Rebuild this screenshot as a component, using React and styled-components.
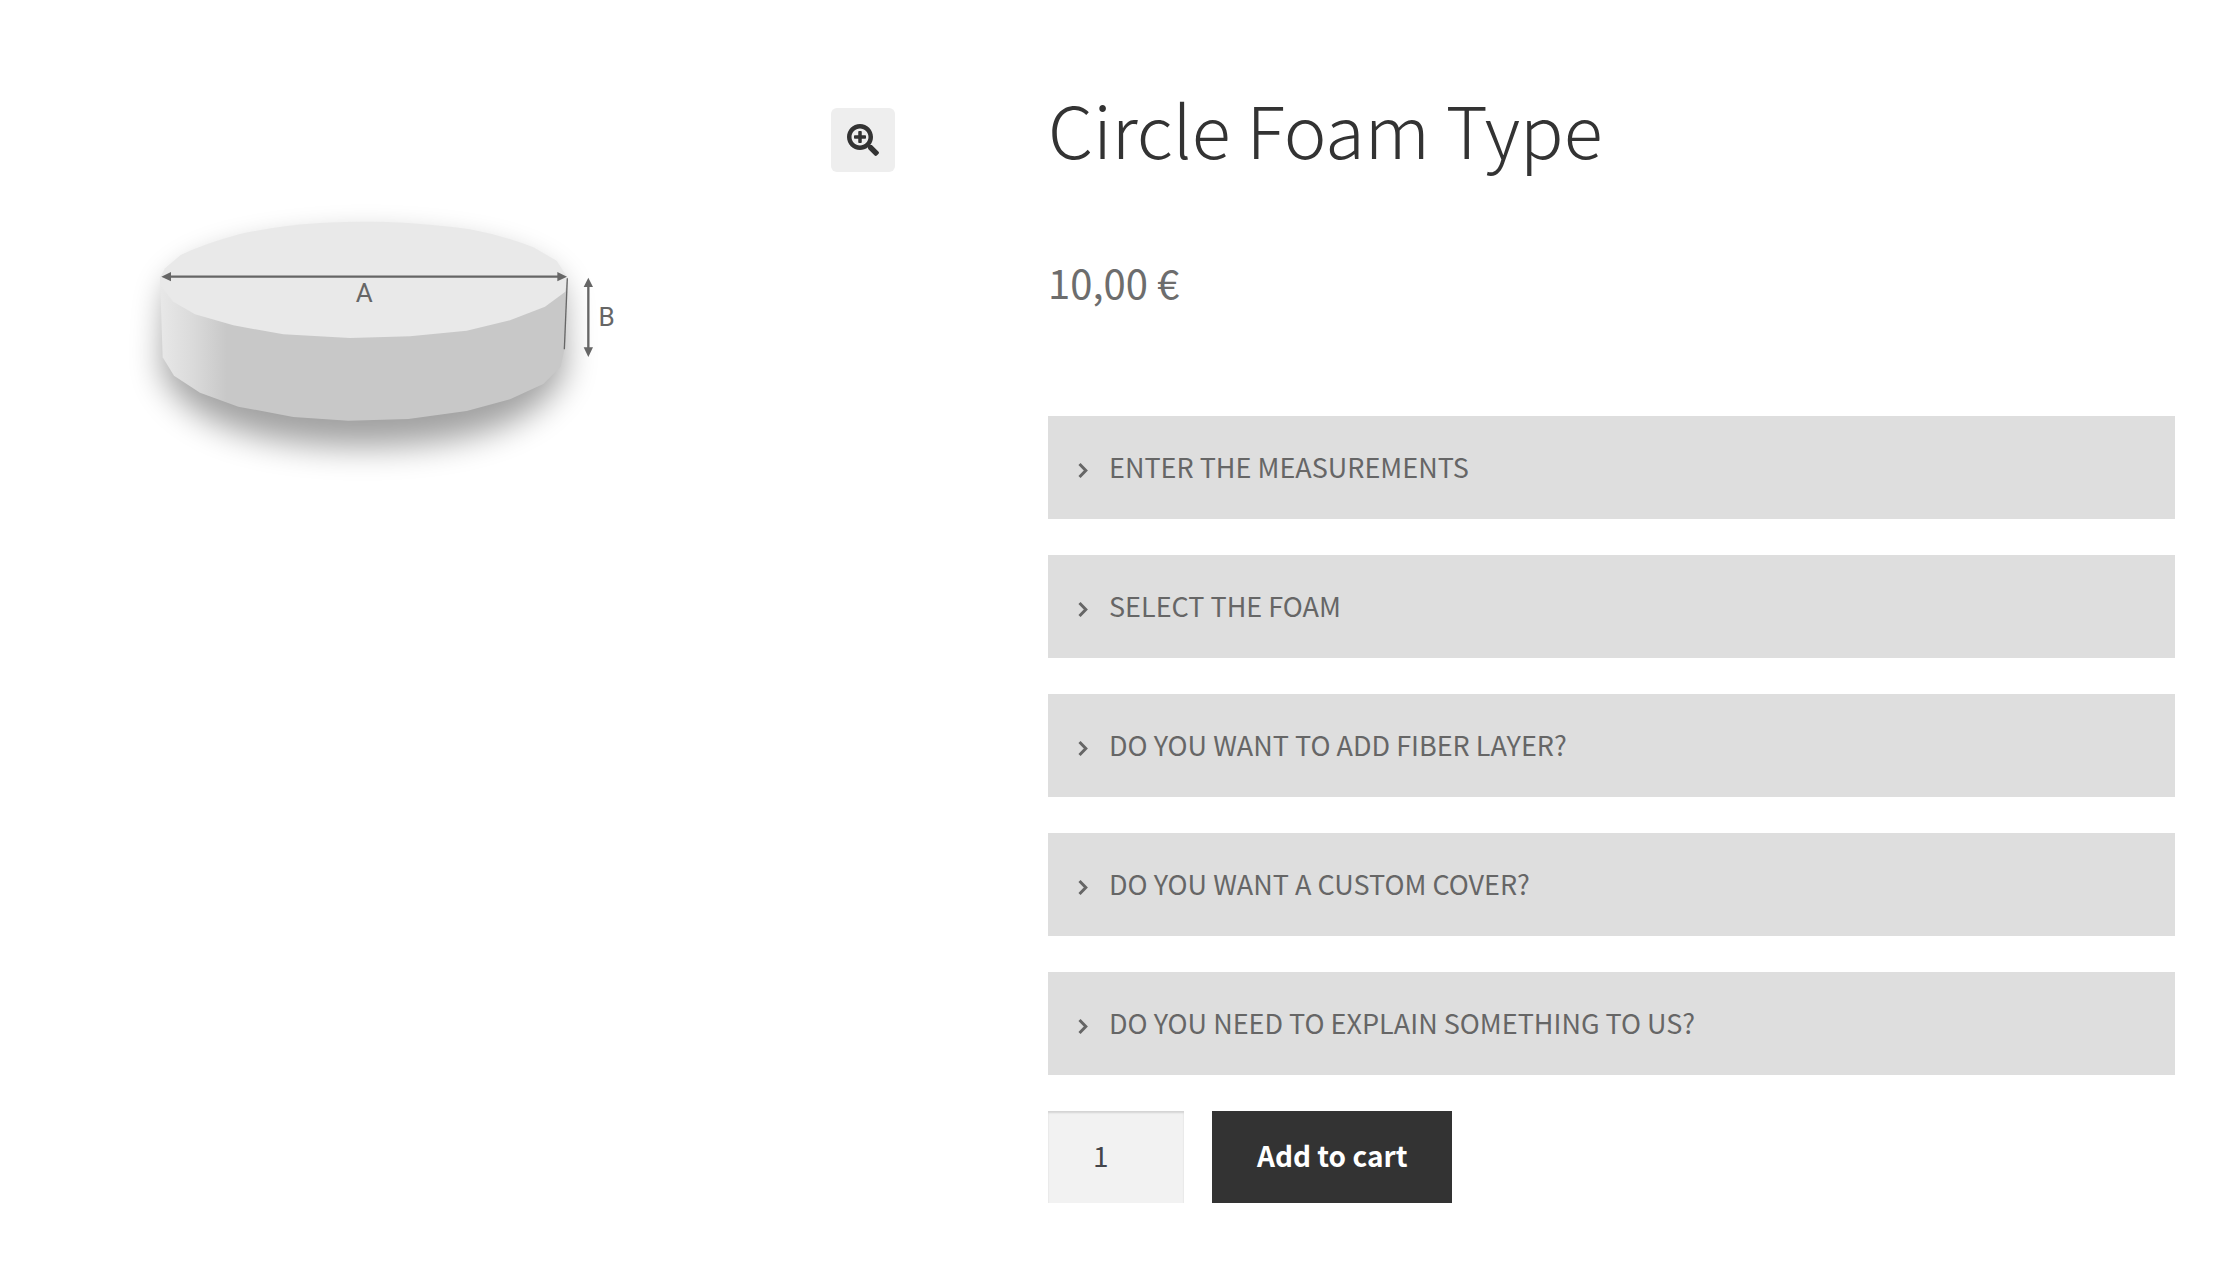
import React, { useState } from 'react';
import styled, { createGlobalStyle } from 'styled-components';
import { FaSearchPlus } from 'react-icons/fa';

const GlobalStyle = createGlobalStyle`
  *, *::before, *::after {
    box-sizing: border-box;
  }

  body {
    margin: 0;
    background-color: #ffffff;
    color: #6d6d6d;
    font-family: 'Source Sans Pro', 'Noto Sans CJK SC', sans-serif;
    font-size: 28px;
  }
`;

const ProductSection = styled.main`
  display: grid;
  grid-template-columns: 874fr 1127fr;
  gap: 123px;
  align-items: start;
  padding: 80px 51px 0;
`;

const Gallery = styled.div`
  position: relative;
`;

const ProductDrawing = styled.svg`
  display: block;
  width: 100%;
  height: auto;
`;

/* Sits over the top right corner of the product picture */
const ZoomButton = styled.button`
  position: absolute;
  top: 28px;
  right: 30px;
  display: flex;
  align-items: center;
  justify-content: center;
  width: 64px;
  height: 64px;
  padding: 0;
  border: 0;
  border-radius: 6px;
  background-color: #eeeeee;
  color: #333333;
  font-size: 32px;
  cursor: pointer;
`;

const Summary = styled.div`
  min-width: 0;
`;

const ProductName = styled.h1`
  margin: 0;
  color: #333333;
  font-size: 72px;
  font-weight: 300;
  line-height: 96px;
`;

const ProductPrice = styled.p`
  margin: 78px 0 106px;
  font-size: 40px;
  line-height: 56px;
`;

const OptionList = styled.div`
  display: flex;
  flex-direction: column;
  gap: 36px;
`;

const OptionButton = styled.button`
  display: flex;
  align-items: center;
  gap: 19px;
  width: 100%;
  padding: 30px 28px 32px;
  border: 0;
  background-color: #dedede;
  color: #666666;
  font-family: inherit;
  font-size: 27px;
  line-height: 41px;
  text-align: left;
  text-transform: uppercase;
  cursor: pointer;
`;

const Chevron = styled.svg`
  flex: none;
  width: 14px;
  height: 24px;
  fill: none;
  stroke: currentColor;
  stroke-width: 3;
`;

const CartForm = styled.form`
  display: flex;
  gap: 28px;
  margin-top: 36px;
`;

const QuantityInput = styled.input`
  width: 136px;
  height: 92px;
  padding: 0 0 4px 45px;
  border: 0;
  border-radius: 0;
  background-color: #f2f2f2;
  box-shadow: inset 0 2px 2px rgba(0, 0, 0, 0.125);
  color: #43454b;
  font-family: inherit;
  font-size: 28px;
  appearance: textfield;
`;

const CartButton = styled.button`
  height: 92px;
  padding: 0 45px 4px;
  border: 0;
  background-color: #333333;
  color: #ffffff;
  font-family: inherit;
  font-size: 28px;
  font-weight: 700;
  cursor: pointer;
`;

const options = [
  'Enter the measurements',
  'Select the foam',
  'Do you want to add fiber layer?',
  'Do you want a custom cover?',
  'Do you need to explain something to us?',
];

const FoamDrawing = () => (
  <ProductDrawing viewBox="-207 -330 2622 1320" role="img" aria-label="Circle foam with diameter A and height B">
    <defs>
      <linearGradient id="side" gradientUnits="userSpaceOnUse" x1="120" y1="0" x2="320" y2="0">
        <stop offset="0" stopColor="#e8e8e8" />
        <stop offset="0.5" stopColor="#dadada" />
        <stop offset="1" stopColor="#c8c8c8" />
      </linearGradient>
      <filter id="shadow" x="-20%" y="-40%" width="140%" height="190%">
        <feGaussianBlur stdDeviation="50" />
      </filter>
    </defs>
    <path
      d="M140 310Q220 160 740 145Q1260 160 1325 310L1335 540Q1240 765 730 770Q220 765 125 540Z"
      fill="#000"
      opacity="0.37"
      filter="url(#shadow)"
    />
    <path
      d="M120 262L128 502L162 557L240 608L355 650L520 681L685 692L865 687L1040 663L1170 628L1270 582L1322 530L1333 480L1342 262Z"
      fill="url(#side)"
    />
    <path
      d="M120 262L135 235L182 195Q250 162 360 132Q480 106 600 99Q700 94 800 96Q930 101 1050 118Q1150 137 1240 172L1310 212L1342 262L1336 305L1275 350L1170 391L1040 422L870 439L690 444L490 433L340 406L225 373L160 335L120 285Z"
      fill="#e9e9e9"
    />
    <path d="M1342 265L1333 478" stroke="#666" strokeWidth="4" />
    <path d="M145 260H1320M1405 285V480" stroke="#666" strokeWidth="7" />
    <path
      d="M124 260L153 246V274ZM1341 260L1312 246V274ZM1405 263L1391 291H1419ZM1405 501L1391 472H1419Z"
      fill="#666"
    />
    <g fill="#666" fontFamily="Roboto, sans-serif" fontSize="78">
      <text x="733" y="337" textAnchor="middle">A</text>
      <text x="1460" y="407" textAnchor="middle">B</text>
    </g>
  </ProductDrawing>
);

const App = () => {
  const [quantity, setQuantity] = useState('1');

  return (
    <>
      <GlobalStyle />
      <ProductSection>
        <Gallery>
          <FoamDrawing />
          <ZoomButton type="button" aria-label="Zoom">
            <FaSearchPlus />
          </ZoomButton>
        </Gallery>
        <Summary>
          <ProductName>Circle Foam Type</ProductName>
          <ProductPrice>10,00 €</ProductPrice>
          <OptionList>
            {options.map((option) => (
              <OptionButton type="button" key={option}>
                <Chevron viewBox="0 0 14 24" aria-hidden="true">
                  <path d="M3.5 9L9.8 15.5L3.5 22" />
                </Chevron>
                {option}
              </OptionButton>
            ))}
          </OptionList>
          <CartForm onSubmit={(event) => event.preventDefault()}>
            <QuantityInput
              type="number"
              min="1"
              aria-label="Quantity"
              value={quantity}
              onChange={(event) => setQuantity(event.target.value)}
            />
            <CartButton type="submit">Add to cart</CartButton>
          </CartForm>
        </Summary>
      </ProductSection>
    </>
  );
};

export default App;
